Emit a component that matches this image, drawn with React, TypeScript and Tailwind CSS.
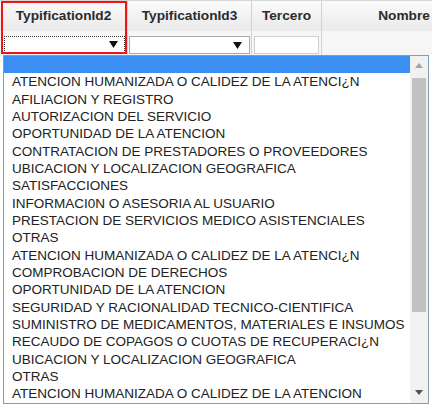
import React from "react";

const items = [
  "ATENCION HUMANIZADA O CALIDEZ DE LA ATENCI¿N",
  "AFILIACION Y REGISTRO",
  "AUTORIZACION DEL SERVICIO",
  "OPORTUNIDAD DE LA ATENCION",
  "CONTRATACION DE PRESTADORES O PROVEEDORES",
  "UBICACION Y LOCALIZACION GEOGRAFICA",
  "SATISFACCIONES",
  "INFORMACI0N O ASESORIA AL USUARIO",
  "PRESTACION DE SERVICIOS MEDICO ASISTENCIALES",
  "OTRAS",
  "ATENCION HUMANIZADA O CALIDEZ DE LA ATENCI¿N",
  "COMPROBACION DE DERECHOS",
  "OPORTUNIDAD DE LA ATENCION",
  "SEGURIDAD Y RACIONALIDAD TECNICO-CIENTIFICA",
  "SUMINISTRO DE MEDICAMENTOS, MATERIALES E INSUMOS",
  "RECAUDO DE COPAGOS O CUOTAS DE RECUPERACI¿N",
  "UBICACION Y LOCALIZACION GEOGRAFICA",
  "OTRAS",
  "ATENCION HUMANIZADA O CALIDEZ DE LA ATENCION",
];

function Arrow({ color = "#111" }: { color?: string }) {
  return (
    <svg width="9" height="7" viewBox="0 0 9 7">
      <polygon points="0,0 9,0 4.5,7" fill={color} />
    </svg>
  );
}

export default function App() {
  return (
    <div
      className="relative w-[432px] h-[404px] overflow-hidden bg-white"
      style={{ fontFamily: '"Liberation Sans", Arial, sans-serif' }}
    >
      {/* header row */}
      <div className="flex h-[31px] border-t border-[#d6d6d6] bg-gradient-to-b from-[#fbfbfb] to-[#e9e9e9] text-[13.7px] font-bold text-[#2b2b2b]">
        <div className="w-[128px] shrink-0 flex items-center justify-center border-r border-[#d2d2d2] pt-[1px]">
          TypificationId2
        </div>
        <div className="w-[124px] shrink-0 flex items-center justify-center border-r border-[#d2d2d2] pt-[1px]">
          TypificationId3
        </div>
        <div className="w-[70px] shrink-0 flex items-center justify-center border-r border-[#d2d2d2] pt-[1px]">
          Tercero
        </div>
        <div className="w-[164px] shrink-0 flex items-center justify-center pt-[1px]">
          Nombre
        </div>
      </div>
      {/* filter row */}
      <div className="flex h-[24px] bg-[#f6f6f6]">
        <div className="w-[128px] shrink-0 border-r border-[#d2d2d2] pt-[5px] pl-[4px]">
          <div className="w-[121px] h-[17px] bg-white border border-dotted border-[#333] flex items-center justify-end pr-[6px]">
            <Arrow />
          </div>
        </div>
        <div className="w-[124px] shrink-0 border-r border-[#d2d2d2] pt-[5px] pl-[1px]">
          <div className="w-[121px] h-[18px] bg-white border border-[#a9a9a9] flex items-center justify-end pr-[7px]">
            <Arrow />
          </div>
        </div>
        <div className="w-[70px] shrink-0 border-r border-[#d2d2d2] pt-[5px] pl-[2px]">
          <div className="w-[65px] h-[18px] bg-white border border-[#cfcfcf]" />
        </div>
        <div className="w-[164px] shrink-0" />
      </div>

      {/* red highlight box */}
      <div className="absolute left-[1px] top-[1px] w-[126px] h-[53px] border-2 border-[#f01414]" />

      {/* dropdown list */}
      <div className="absolute left-[3px] top-[55px] w-[426px] h-[349px] bg-white border border-[#7f9db9] flex">
        <div className="flex-1 flex flex-col text-[13.5px] text-[#222] leading-[17.33px]">
          <div className="h-[17.33px] shrink-0 bg-[#3b8ff3]" />
          {items.map((t, i) => (
            <div key={i} className="h-[17.33px] shrink-0 pl-[8px] whitespace-nowrap">
              {t}
            </div>
          ))}
        </div>
        <div className="w-[18px] shrink-0 bg-[#f1f1f1] flex flex-col">
          <div className="h-[18px] flex items-center justify-center">
            <svg width="8" height="5" viewBox="0 0 8 5">
              <polygon points="0,5 8,5 4,0" fill="#a3a3a3" />
            </svg>
          </div>
          <div className="h-[234px] mx-[2px] mt-[4px] bg-[#c1c1c1]" />
          <div className="flex-1" />
          <div className="h-[18px] flex items-center justify-center mb-[2px]">
            <svg width="8" height="5" viewBox="0 0 8 5">
              <polygon points="0,0 8,0 4,5" fill="#505050" />
            </svg>
          </div>
        </div>
      </div>
    </div>
  );
}
